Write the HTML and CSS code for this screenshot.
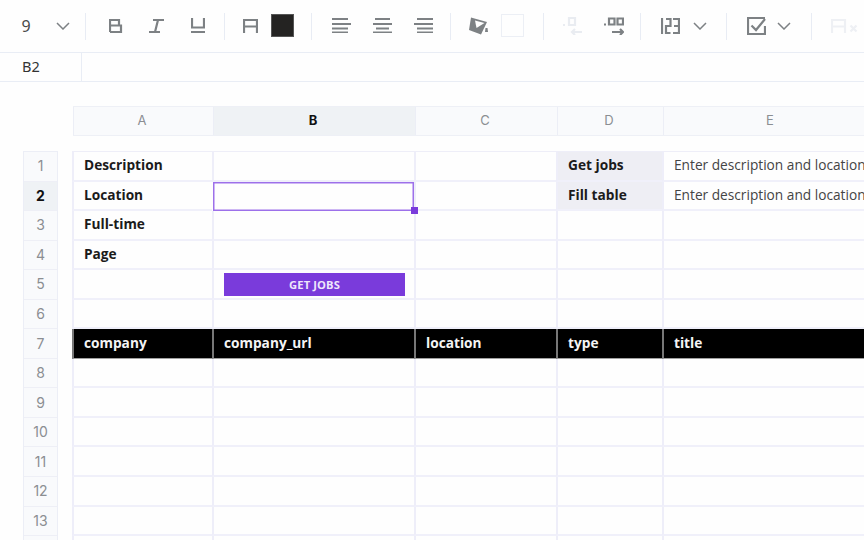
FILE: index.html
```html
<!DOCTYPE html>
<html lang="en">
<head>
<meta charset="utf-8">
<title>Sheet</title>
<link rel="stylesheet" href="styles.css">
</head>
<body>
<div class="toolbar">
  <span class="font-size">9</span>
  <svg class="chev chev-font" viewBox="0 0 14 8"><path d="M1 1l6 6 6-6"/></svg>
  <i class="sep s1"></i>
  <svg class="ico b" viewBox="0 0 14 14"><path d="M1 13V1h9v5.500M1 6.500h11v6.500H1"/></svg>
  <svg class="ico it" viewBox="0 0 15 14"><path d="M4 1h11M0 13h11M9 1 6 13"/></svg>
  <svg class="ico un" viewBox="0 0 14 15"><path d="M1 0v9.500h12V0M0 14h14"/></svg>
  <i class="sep s2"></i>
  <svg class="ico fa" viewBox="0 0 15 14"><path d="M1 14V1h13v13M1 7.500h13"/></svg>
  <i class="swatch dark"></i>
  <i class="sep s3"></i>
  <svg class="ico al a1" viewBox="0 0 19 15"><path d="M0 1h16M0 6h19M0 10.500h16M0 14.500h16"/></svg>
  <svg class="ico al a2" viewBox="0 0 19 15"><path d="M2 1h15M0 6h19M3 10.500h13M0 14.500h19"/></svg>
  <svg class="ico al a3" viewBox="0 0 19 15"><path d="M3 1h16M0 6h19M3 10.500h16M3 14.500h16"/></svg>
  <i class="sep s4"></i>
  <svg class="ico fill" viewBox="0 0 19 18"><path class="solid" d="M2 .500 18 5 12 17.500 0 13Z"/><path class="hole" d="M6 3.500 15.500 6 7.500 11Z"/><path class="solid" d="M16.500 11h2l.5 4h-3Z"/></svg>
  <i class="swatch blank"></i>
  <i class="sep s5"></i>
  <svg class="ico dec" viewBox="0 0 20 18"><path d="M6 1h6v7H6ZM19 15H9M12 12l-3 3 3 3"/><path d="M0 8h2"/></svg>
  <svg class="ico inc" viewBox="0 0 20 18"><path d="M5 1.500h5.500v6H5ZM13.500 1.500H19v6h-5.500ZM8 15h11M16 12l3 3-3 3"/><path d="M0 7.500h2"/></svg>
  <i class="sep s6"></i>
  <svg class="ico num" viewBox="0 0 19 16"><path d="M1 0v16M5 1h4.500v7H5v7h4.500M12 1h6v14h-6M13 8h5"/></svg>
  <svg class="chev chev-num" viewBox="0 0 14 8"><path d="M1 1l6 6 6-6"/></svg>
  <i class="sep s7"></i>
  <svg class="ico chk" viewBox="0 0 19 18"><path d="M18 1H1v16h17V9M4.500 8.500l4.500 4.500 9-11"/></svg>
  <svg class="chev chev-chk" viewBox="0 0 14 8"><path d="M1 1l6 6 6-6"/></svg>
  <i class="sep s8"></i>
  <svg class="ico ax" viewBox="0 0 27 14"><path d="M1 14V1h13v13M1 7.500h13M19.500 6.500l6 6M25.500 6.500l-6 6"/></svg>
</div>
<div class="formula"><span class="cell-ref">B2</span></div>
<div class="sheet">
  <div class="col-heads">
    <div class="col-head">A</div>
    <div class="col-head active">B</div>
    <div class="col-head">C</div>
    <div class="col-head">D</div>
    <div class="col-head">E</div>
  </div>
  <div class="body-row">
    <div class="row-heads">
      <div class="row-head">1</div>
      <div class="row-head active">2</div>
      <div class="row-head">3</div>
      <div class="row-head">4</div>
      <div class="row-head">5</div>
      <div class="row-head">6</div>
      <div class="row-head">7</div>
      <div class="row-head">8</div>
      <div class="row-head">9</div>
      <div class="row-head">10</div>
      <div class="row-head">11</div>
      <div class="row-head">12</div>
      <div class="row-head">13</div>
      <div class="row-head"></div>
    </div>
    <div class="cells">
      <div class="c strong">Description</div><div class="c"></div><div class="c"></div><div class="c strong tint">Get jobs</div><div class="c">Enter description and location</div>
      <div class="c strong">Location</div><div class="c selected"><i class="handle"></i></div><div class="c"></div><div class="c strong tint">Fill table</div><div class="c">Enter description and location</div>
      <div class="c strong">Full-time</div><div class="c"></div><div class="c"></div><div class="c"></div><div class="c"></div>
      <div class="c strong">Page</div><div class="c"></div><div class="c"></div><div class="c"></div><div class="c"></div>
      <div class="c"></div><div class="c"><button class="run" type="button">GET JOBS</button></div><div class="c"></div><div class="c"></div><div class="c"></div>
      <div class="c"></div><div class="c"></div><div class="c"></div><div class="c"></div><div class="c"></div>
      <div class="c th">company</div><div class="c th">company_url</div><div class="c th">location</div><div class="c th">type</div><div class="c th">title</div>
      <div class="c"></div><div class="c"></div><div class="c"></div><div class="c"></div><div class="c"></div>
      <div class="c"></div><div class="c"></div><div class="c"></div><div class="c"></div><div class="c"></div>
      <div class="c"></div><div class="c"></div><div class="c"></div><div class="c"></div><div class="c"></div>
      <div class="c"></div><div class="c"></div><div class="c"></div><div class="c"></div><div class="c"></div>
      <div class="c"></div><div class="c"></div><div class="c"></div><div class="c"></div><div class="c"></div>
      <div class="c"></div><div class="c"></div><div class="c"></div><div class="c"></div><div class="c"></div>
      <div class="c"></div><div class="c"></div><div class="c"></div><div class="c"></div><div class="c"></div>
    </div>
  </div>
</div>
</body>
</html>
```
FILE: styles.css
```css
* { box-sizing: border-box; }
html, body { margin: 0; height: 100%; overflow: hidden; }
body { width: 864px; height: 540px; background: #fefefe; font-family: "Open Sans", sans-serif; color: #1f1f1f; }

.toolbar { height: 53px; border-bottom: 1px solid #e9edf5; display: flex; align-items: center; padding-bottom: 1px; }
.font-size { width: 52px; text-align: center; font-family: "Noto Sans", sans-serif; font-size: 16px; color: #4a4a4a; }
.sep { width: 1px; height: 27px; margin-top: 2px; background: #e8ecf4; flex: none; }
.swatch { width: 23px; height: 23px; flex: none; }
.swatch.dark { background: #242322; margin-left: 13px; border: 1px solid #555; }
.swatch.blank { border: 1px solid #eceff5; margin-left: 13px; }
.ico, .chev { flex: none; fill: none; stroke: #7d8184; stroke-width: 2.2; display: block; }
.chev { width: 14px; height: 8px; stroke-width: 1.5; }
.chev-font { margin-left: 4px; }
.chev-num { margin-left: 13px; }
.chev-chk { margin-left: 11px; }
.s1 { margin-left: 15px; }
.b { width: 14px; height: 14px; margin-left: 23px; }
.it { width: 15px; height: 14px; margin-left: 26px; }
.un { width: 14px; height: 15px; margin-left: 27px; }
.s2 { margin-left: 19px; }
.fa { width: 15px; height: 14px; margin-left: 18px; }
.s3 { margin-left: 17px; }
.al { width: 19px; height: 15px; stroke-width: 2; }
.a1 { margin-left: 20px; }
.a2 { margin-left: 22px; }
.a3 { margin-left: 22px; }
.s4 { margin-left: 17px; }
.fill { width: 19px; height: 18px; margin-left: 18px; stroke: none; }
.fill .solid { fill: #7d8184; }
.fill .hole { fill: #fefefe; }
.s5 { margin-left: 19px; }
.dec { width: 20px; height: 18px; margin-left: 19px; stroke: #e9ecf1; }
.inc { width: 20px; height: 18px; margin-left: 21px; }
.s6 { margin-left: 16px; }
.num { width: 19px; height: 16px; margin-left: 20px; }
.s7 { margin-left: 19px; }
.chk { width: 19px; height: 18px; margin-left: 20px; }
.s8 { margin-left: 20px; }
.ax { width: 27px; height: 14px; margin-left: 19px; stroke: #eef0f4; }

.formula { height: 29px; border-bottom: 1px solid #e9edf5; display: flex; }
.cell-ref { width: 82px; border-right: 1px solid #e9edf5; padding-left: 22px; font-family: "Noto Sans", sans-serif; font-size: 14.500px; line-height: 27px; color: #333; }

.sheet { padding: 24px 0 0 23px; }
.col-heads, .cells { display: grid; grid-template-columns: 140px 202px 142px 106px 216px; }
.col-heads { margin-left: 50px; height: 30px; border-top: 1px solid #eef0f6; border-bottom: 1px solid #eef0f6; }
.col-head { background: #f9fafc; border-left: 1px solid #eceef6; font-family: Inter, sans-serif; font-size: 13px; color: #8b8e92; display: flex; align-items: center; justify-content: center; padding: 0 3px 2px 0; }
.col-head.active { background: #eff2f5; color: #111; font-weight: 700; }
.body-row { display: flex; margin-top: 15px; }
.row-heads { width: 35px; margin-right: 14px; flex: none; border: 1px solid #eceef6; border-bottom: 0; display: grid; grid-auto-rows: 29.55px; background: #f9fafc; }
.row-head { font-family: Inter, sans-serif; font-size: 14px; color: #8b8e92; border-bottom: 1px solid #eeeff6; padding-bottom: 1px; display: flex; align-items: center; justify-content: center; }
.row-head.active { background: #eff2f5; color: #111; font-weight: 700; }
.cells { grid-auto-rows: 29.55px; flex: none; border-top: 1px solid #eeeef8; }
.c { border-left: 2px solid #eeeef9; border-bottom: 2px solid #f0f0fa; padding: 0 0 2px 10px; font-size: 13.700px; white-space: nowrap; overflow: hidden; color: #444; display: flex; align-items: center; }
.strong { font-weight: 700; color: #1b1b1b; }
.tint { background: #eeeef4; }
.th { background: #000; color: #f4f4f4; font-weight: 700; border-left: 2px solid #777; border-bottom: 1px solid #a0a0a0; padding-bottom: 3px; }
.selected { overflow: visible; position: relative; margin-left: 1px; border: 0; box-shadow: inset 0 0 0 1.500px #9d70ea; }
.handle { position: absolute; right: -4px; bottom: -3px; width: 7px; height: 7px; background: #7a3bdb; z-index: 2; }
.run { width: 181px; height: 23px; margin-top: 4px; padding: 0; background: #7a3bdb; border: 0; color: #eee6fb; font-family: "Open Sans", sans-serif; font-size: 11.200px; font-weight: 700; letter-spacing: .1px; }
```
